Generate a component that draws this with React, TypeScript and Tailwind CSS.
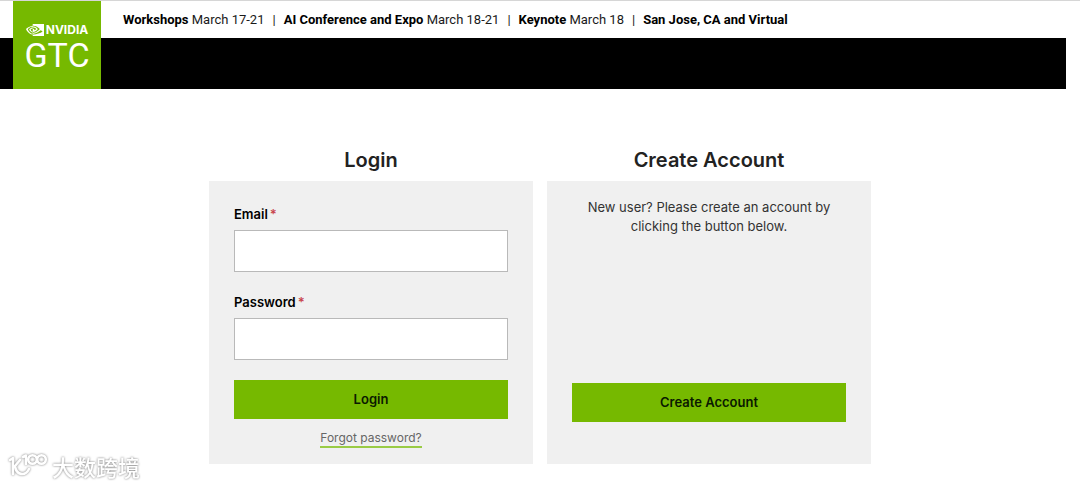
import type { ReactNode } from "react";
import { SiNvidia } from "react-icons/si";

function Field({ id, label, type }: { id: string; label: string; type: string }) {
  return (
    <div>
      <label htmlFor={id} className="block text-[13px] leading-[18px] font-semibold text-black">
        {label}
        <span className="ml-0.5 text-[#c8444c]">*</span>
      </label>
      <input
        id={id}
        type={type}
        required
        className="mt-[7px] block h-[42px] w-full border border-[#b9b9b9] bg-white px-3 text-sm outline-none focus:border-[#76b900]"
      />
    </div>
  );
}

function Panel({ title, children }: { title: string; children: ReactNode }) {
  return (
    <section className="flex min-w-0 flex-1 flex-col">
      <h2 className="text-center text-[20px] leading-7 font-semibold text-[#222]">{title}</h2>
      <div className="mt-[7px] flex flex-1 flex-col bg-[#f0f0f0] px-[25px]">{children}</div>
    </section>
  );
}

function Watermark() {
  return (
    <div className="absolute bottom-1 left-2 flex items-center gap-1 [filter:drop-shadow(0_0_1px_#777)]">
      <svg viewBox="0 0 40 28" className="h-7 w-10" fill="none" stroke="#fff" strokeWidth="2.6" strokeLinecap="round" strokeLinejoin="round" aria-hidden="true">
        <path d="M2 8 L5 6 V22" />
        <path d="M12 8 L7 14 C8 23 17 25 21 17" />
        <path d="M15 5 L18 3.500 V12" />
        <circle cx="24.500" cy="7.500" r="4.300" />
        <circle cx="33.500" cy="7.500" r="4.300" />
      </svg>
      <span className="font-['Noto_Sans_CJK_SC',sans-serif] text-[22px] leading-8 font-medium text-white">大数跨境</span>
    </div>
  );
}

const events = [
  { name: "Workshops", date: "March 17-21" },
  { name: "AI Conference and Expo", date: "March 18-21" },
  { name: "Keynote", date: "March 18" },
  { name: "San Jose, CA and Virtual", date: "" },
];

export default function App() {
  return (
    <div className="relative flex min-h-screen flex-col bg-white font-['Inter',sans-serif] text-black">
      <header className="grid grid-cols-[13px_88px_1fr] grid-rows-[37px_51px] border-t border-[#d6d6d6]">
        <p className="col-start-3 row-start-1 flex items-center gap-2 pl-[22px] font-['Roboto',sans-serif] text-[13px] leading-5 whitespace-nowrap text-[#1a1a1a]">
          {events.map(({ name, date }, i) => (
            <span key={name} className="flex gap-2">
              {i > 0 && <span>|</span>}
              <span>
                <b className="font-bold text-black">{name}</b> {date}
              </span>
            </span>
          ))}
        </p>
        <div className="col-span-3 col-start-1 row-start-2 mr-3.5 bg-black" />
        <a href="#" className="z-10 col-start-2 row-span-2 row-start-1 flex flex-col items-center bg-[#76b900] pt-5 text-white">
          <span className="flex items-center gap-0.5">
            <SiNvidia className="h-[18px] w-[18px]" aria-hidden="true" />
            <span className="text-[12px] leading-[14px] font-bold">NVIDIA</span>
          </span>
          <span className="font-['Roboto',sans-serif] text-[34px] leading-8">GTC</span>
        </a>
      </header>

      <main className="mx-auto mt-[57px] flex w-full max-w-[662px] gap-3.5">
        <Panel title="Login">
          <form className="flex flex-col pt-6 pb-4" onSubmit={(e) => e.preventDefault()}>
            <div className="flex flex-col gap-[21px]">
              <Field id="email" label="Email" type="email" />
              <Field id="password" label="Password" type="password" />
            </div>
            <button type="submit" className="mt-5 h-[39px] bg-[#76b900] text-[13px] font-semibold text-[#0a1a00]">
              Login
            </button>
            <a href="#" className="mt-2.5 self-center border-b-2 border-[#9acb45] text-[12px] leading-[17px] text-[#666]">
              Forgot password?
            </a>
          </form>
        </Panel>
        <Panel title="Create Account">
          <p className="pt-[17px] text-center text-[13px] leading-[19px] text-[#333]">
            New user? Please create an account by clicking the button below.
          </p>
          <button type="button" className="mt-auto mb-[42px] h-[39px] bg-[#76b900] text-[13px] font-semibold text-[#0a1a00]">
            Create Account
          </button>
        </Panel>
      </main>

      <Watermark />
    </div>
  );
}
